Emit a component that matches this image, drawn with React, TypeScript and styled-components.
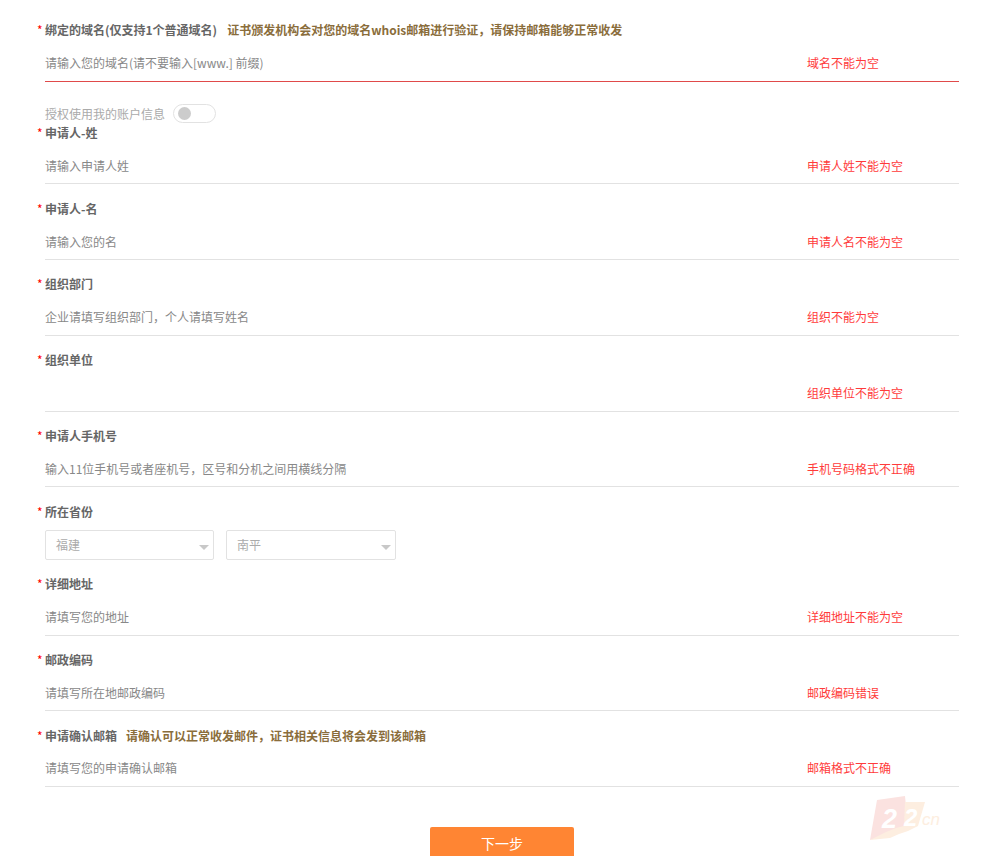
import React from 'react';
import styled, { createGlobalStyle } from 'styled-components';

const Global = createGlobalStyle`
  html, body { margin: 0; padding: 0; background: #fff; overflow: hidden; height: 856px; }
  body { font-family: "Noto Sans CJK SC", "Liberation Sans", sans-serif; font-size: 12px; }
`;

const Page = styled.form`
  position: relative;
  width: 982px;
  height: 856px;
  padding: 20px 23px 0 45px;
  box-sizing: border-box;
  overflow: hidden;
`;

const Field = styled.div`
  margin-bottom: ${p => p.$gap ?? 14.3}px;
`;

const Label = styled.label`
  position: relative;
  display: block;
  height: 19.4px;
  line-height: 20px;
  font-size: 12px;
  font-weight: 700;
  color: #666;
  white-space: nowrap;
`;

const Star = styled.span`
  position: absolute;
  left: -8px;
  top: 0;
  color: #f00;
  font-weight: 400;
`;

const Note = styled.span`
  margin-left: ${p => p.$ml}px;
  color: #8a6d3b;
`;

const InputRow = styled.div`
  display: flex;
  align-items: center;
  justify-content: space-between;
  height: ${p => (p.$focused ? 42.6 : 42)}px;
  box-sizing: border-box;
  border-bottom: 1px solid ${p => (p.$focused ? '#e04a4a' : '#e2e2e2')};
  padding-top: 6px;
`;

const Placeholder = styled.span`
  color: #888;
  line-height: 18px;
`;

const ErrorText = styled.span`
  width: 152px;
  color: #ff3b3b;
  line-height: 18px;
`;

const SwitchRow = styled.div`
  display: flex;
  align-items: center;
  gap: 8px;
  height: 19.1px;
  margin-top: 22px;
  color: #aaa;
`;

const SwitchTrack = styled.span`
  display: block;
  position: relative;
  width: 41px;
  height: 17px;
  border: 1px solid #e2e2e2;
  border-radius: 10px;
  background: #fff;
`;

const SwitchKnob = styled.span`
  position: absolute;
  left: 4px;
  top: 2px;
  width: 13px;
  height: 13px;
  border-radius: 50%;
  background: #ccc;
`;

const SelectRow = styled.div`
  display: flex;
  gap: 12px;
  margin-top: 9px;
`;

const Select = styled.div`
  position: relative;
  width: ${p => p.$w}px;
  height: 30px;
  box-sizing: border-box;
  border: 1px solid #e2e2e2;
  border-radius: 2px;
  padding-left: 10px;
  line-height: 28px;
  color: #aaa;
  &::after {
    content: '';
    position: absolute;
    right: 4px;
    top: 14px;
    border-left: 5px solid transparent;
    border-right: 5px solid transparent;
    border-top: 5px solid #c8c8c8;
  }
`;

const Actions = styled.div`
  display: flex;
  justify-content: center;
  margin-top: 39.75px;
`;

const NextButton = styled.button`
  width: 144px;
  height: 40px;
  border: 0;
  border-radius: 2px;
  background: #ff8533;
  color: #fff;
  font: 14px/32px "Noto Sans CJK SC", "Liberation Sans", sans-serif;
  padding: 0 0 8px;
`;

const Watermark = styled.svg`
  position: absolute;
  left: 866px;
  top: 794px;
  width: 80px;
  height: 48px;
`;

const fields = [
  ['申请人-姓', '请输入申请人姓', '申请人姓不能为空'],
  ['申请人-名', '请输入您的名', '申请人名不能为空'],
  ['组织部门', '企业请填写组织部门，个人请填写姓名', '组织不能为空'],
  ['组织单位', '', '组织单位不能为空'],
  ['申请人手机号', '输入11位手机号或者座机号，区号和分机之间用横线分隔', '手机号码格式不正确'],
];

const fieldsAfter = [
  ['详细地址', '请填写您的地址', '详细地址不能为空'],
  ['邮政编码', '请填写所在地邮政编码', '邮政编码错误'],
];

type ItemProps = { label: string; ph: string; err: string; note?: string; gap?: number };

const Item = ({ label, ph, err, note, gap }: ItemProps) => (
  <Field $gap={gap}>
    <Label><Star>*</Star>{label}{note && <Note $ml={9}>{note}</Note>}</Label>
    <InputRow><Placeholder>{ph}</Placeholder><ErrorText>{err}</ErrorText></InputRow>
  </Field>
);

export default function App() {
  return (
    <Page>
      <Global />
      <Field $gap={0}>
        <Label><Star>*</Star>绑定的域名(仅支持1个普通域名)<Note $ml={10}>证书颁发机构会对您的域名whois邮箱进行验证，请保持邮箱能够正常收发</Note></Label>
        <InputRow $focused><Placeholder>请输入您的域名(请不要输入[www.] 前缀)</Placeholder><ErrorText>域名不能为空</ErrorText></InputRow>
      </Field>
      <SwitchRow>授权使用我的账户信息<SwitchTrack><SwitchKnob /></SwitchTrack></SwitchRow>
      {fields.map(f => <Item key={f[0]} label={f[0]} ph={f[1]} err={f[2]} />)}
      <Field $gap={14.45}>
        <Label><Star>*</Star>所在省份</Label>
        <SelectRow>
          <Select $w={169}>福建</Select>
          <Select $w={170}>南平</Select>
        </SelectRow>
      </Field>
      {fieldsAfter.map(f => <Item key={f[0]} label={f[0]} ph={f[1]} err={f[2]} gap={14.2} />)}
      <Item label="申请确认邮箱" ph="请填写您的申请确认邮箱" err="邮箱格式不正确" note="请确认可以正常收发邮件，证书相关信息将会发到该邮箱" gap={14.2} />
      <Actions><NextButton type="button">下一步</NextButton></Actions>
      <Watermark viewBox="0 0 80 48">
        <polygon points="11,6 39,2 42,32 34,37 26,40 17,42 4,46" fill="#fbe2e0" />
        <polygon points="39,8 59,8 52,32 42,37 33,40 24,44 4,46 20,38 30,34 38,32" fill="#fdeee0" />
        <text x="16" y="34" fontFamily="Liberation Sans, sans-serif" fontWeight="700" fontStyle="italic" fontSize="27" fill="#fff">2</text>
        <text x="38" y="32" fontFamily="Liberation Sans, sans-serif" fontWeight="700" fontStyle="italic" fontSize="24" fill="#fff">2</text>
        <text x="56" y="31" fontFamily="Liberation Sans, sans-serif" fontStyle="italic" fontSize="17" fill="#fdeee0">cn</text>
      </Watermark>
    </Page>
  );
}
